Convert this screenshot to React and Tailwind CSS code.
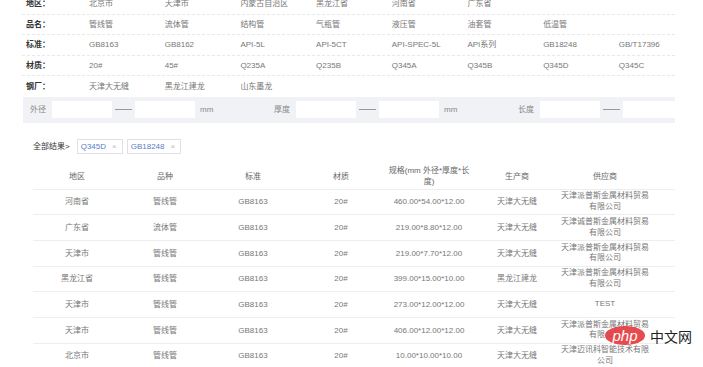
const filterRows = [
  ["地区", ["北京市", "天津市", "内蒙古自治区", "黑龙江省", "河南省", "广东省"]],
  ["品名", ["管线管", "流体管", "结构管", "气瓶管", "液压管", "油套管", "低温管"]],
  ["标准", ["GB8163", "GB8162", "API-5L", "API-5CT", "API-SPEC-5L", "API系列", "GB18248", "GB/T17396"]],
  ["材质", ["20#", "45#", "Q235A", "Q235B", "Q345A", "Q345B", "Q345D", "Q345C"]],
  ["钢厂", ["天津大无缝", "黑龙江建龙", "山东墨龙"]],
];

const ranges = [
  ["外径", "mm"],
  ["厚度", "mm"],
  ["长度", ""],
];

const tags = ["Q345D", "GB18248"];

const rows = [
  ["河南省", "管线管", "GB8163", "20#", "460.00*54.00*12.00", "天津大无缝", ["天津派普斯金属材料贸易", "有限公司"]],
  ["广东省", "流体管", "GB8163", "20#", "219.00*8.80*12.00", "天津大无缝", ["天津诚普斯金属材料贸易", "有限公司"]],
  ["天津市", "管线管", "GB8163", "20#", "219.00*7.70*12.00", "天津大无缝", ["天津派普斯金属材料贸易", "有限公司"]],
  ["黑龙江省", "管线管", "GB8163", "20#", "399.00*15.00*10.00", "黑龙江建龙", ["天津派普斯金属材料贸易", "有限公司"]],
  ["天津市", "管线管", "GB8163", "20#", "273.00*12.00*12.00", "天津大无缝", ["TEST"]],
  ["天津市", "管线管", "GB8163", "20#", "406.00*12.00*12.00", "天津大无缝", ["天津派普斯金属材料贸易", "有限公司"]],
  ["北京市", "管线管", "GB8163", "20#", "10.00*10.00*10.00", "天津大无缝", ["天津迈讯科智能技术有限", "公司"]],
];

function RangeGroup({ label, unit }) {
  return (
    <div className="flex w-[244px] shrink-0 items-center">
      <span className="w-[22px] shrink-0 text-[#888]">{label}</span>
      <div className="h-[17px] w-[60px] shrink-0 bg-white" />
      <span className="mx-[3px] h-px w-[17px] shrink-0 bg-[#999]" />
      <div className="h-[17px] w-[60px] shrink-0 bg-white" />
      {unit && <span className="ml-[5px] text-[#888]">{unit}</span>}
    </div>
  );
}

export default function App() {
  return (
    <div className="relative h-[367px] w-[703px] overflow-hidden bg-white font-['Liberation_Sans','Noto_Sans_CJK_SC',sans-serif] text-[8px] leading-[11px] text-[#777]">
      {/* filter options */}
      <div className="-mt-[6px] ml-[22px] w-[653px]">
        {filterRows.map(([label, values], i) => (
          <div
            key={label}
            className={`flex h-[20.5px] items-center ${i < filterRows.length - 1 ? "border-b border-dashed border-[#e8e8e8]" : ""}`}
          >
            <span className="w-[67px] shrink-0 pl-[4px] font-bold text-[#333]">{label}：</span>
            {values.map((v) => (
              <span key={v} className="w-[75.7px] shrink-0 whitespace-nowrap">{v}</span>
            ))}
          </div>
        ))}
      </div>

      {/* size ranges */}
      <div className="ml-[23px] flex h-[26px] w-[652px] items-center overflow-hidden bg-[#f1f2f6] pl-[7px]">
        {ranges.map(([label, unit]) => (
          <RangeGroup key={label} label={label} unit={unit} />
        ))}
      </div>

      {/* selected tags */}
      <div className="mt-[16px] flex items-center pl-[33px]">
        <span className="mr-[7px] text-[#333]">全部结果&gt;</span>
        {tags.map((t) => (
          <span
            key={t}
            className="mr-[4px] flex h-[15px] items-center border border-[#dfe1e8] pl-[3px] pr-[5px] text-[#5b7ec6]"
          >
            {t}
            <span className="ml-[6px] text-[#bbb]">×</span>
          </span>
        ))}
      </div>

      {/* results table */}
      <div className="ml-[33px] mt-[10px] w-[642px]">
        <div className="grid h-[26px] grid-cols-[repeat(7,88px)] items-center border-b border-[#eee] text-center text-[#666]">
          <span>地区</span>
          <span>品种</span>
          <span>标准</span>
          <span>材质</span>
          <span>
            规格(mm 外径*厚度*长
            <br />
            度)
          </span>
          <span>生产商</span>
          <span>供应商</span>
        </div>
        {rows.map((r, i) => (
          <div
            key={i}
            className="grid h-[25.7px] grid-cols-[repeat(7,88px)] items-center border-b border-[#eee] text-center"
          >
            {r.slice(0, 6).map((c, j) => (
              <span key={j} className="whitespace-nowrap">{c}</span>
            ))}
            <span className="whitespace-nowrap leading-[10.5px]">
              {r[6].map((line, k) => (
                <span key={k} className="block">{line}</span>
              ))}
            </span>
          </div>
        ))}
      </div>

      {/* watermark */}
      <div className="absolute left-[605px] top-[326px] flex items-center">
        <div className="flex h-[19px] w-[40px] items-center justify-center rounded-[50%] bg-[#e3393c]/90">
          <span className="font-['Liberation_Sans',sans-serif] text-[15px] italic leading-none text-white">php</span>
        </div>
        <span className="ml-[5px] font-['Noto_Sans_CJK_SC',sans-serif] text-[14px] leading-none text-[#222]">中文网</span>
      </div>
    </div>
  );
}
